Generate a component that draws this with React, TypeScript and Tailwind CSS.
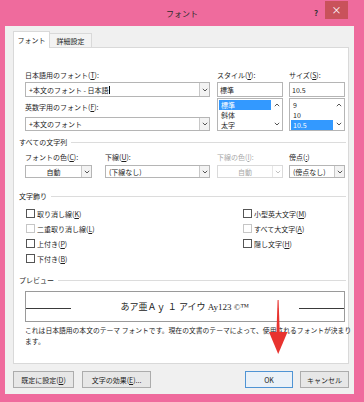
import React from 'react'

function Chevron({ up = false, color = '#555' }: { up?: boolean; color?: string }) {
  return (
    <svg width="6" height="4" viewBox="0 0 6 4" className={up ? 'rotate-180' : ''}>
      <path d="M0.8 0.8 L3 3 L5.2 0.8" fill="none" stroke={color} strokeWidth="1" />
    </svg>
  )
}

function Combo({ value, className = '', center = false, disabled = false, caret = false }: { value: string; className?: string; center?: boolean; disabled?: boolean; caret?: boolean }) {
  return (
    <div className={`flex items-stretch border bg-white ${disabled ? 'border-[#dadada]' : 'border-[#b5b5b5]'} ${className}`}>
      <div className={`flex-1 flex items-center px-[3px] whitespace-nowrap ${center ? 'justify-center' : ''} ${disabled ? 'text-[#a8a8a8]' : 'text-[#1e1e1e]'}`}>
        {value}
        {caret && <span className="ml-px w-px h-[8px] bg-black" />}
      </div>
      <div className={`w-[10px] flex items-center justify-center border-l ${disabled ? 'border-[#e6e6e6]' : 'border-[#c8c8c8] bg-[#f3f3f3]'}`}>
        <Chevron color={disabled ? '#c0c0c0' : '#555'} />
      </div>
    </div>
  )
}

function TextBox({ value }: { value: string }) {
  return <div className="mt-[2px] h-[15px] border border-[#b5b5b5] bg-white flex items-center px-[2px]">{value}</div>
}

function ListBox({ items, selected }: { items: string[]; selected: number }) {
  return (
    <div className="mt-[1px] h-[33px] flex border border-[#b5b5b5] bg-white">
      <div className="flex-1 flex flex-col pt-[1px] pl-px">
        {items.map((it, i) => (
          <div key={it} className={`h-[10px] leading-[10px] pl-[2px] ${i === selected ? 'bg-[#3399ff] text-white' : ''}`}>
            {it}
          </div>
        ))}
      </div>
      <div className="w-[11px] flex flex-col justify-between items-center py-[4px]">
        <Chevron up />
        <Chevron />
      </div>
    </div>
  )
}

function Section({ title, className = '' }: { title: string; className?: string }) {
  return (
    <div className={`flex items-center h-[10px] gap-[4px] ${className}`}>
      <span className="whitespace-nowrap">{title}</span>
      <div className="flex-1 h-px bg-[#dcdcdc]" />
    </div>
  )
}

function Check({ label, k, disabled = false }: { label: string; k: string; disabled?: boolean }) {
  return (
    <div className="flex items-center h-[15px] gap-[2px]">
      <div className={`w-[9px] h-[9px] border bg-white ${disabled ? 'border-[#c6c6c6]' : 'border-[#555]'}`} />
      <span className="whitespace-nowrap">
        {label}(<u>{k}</u>)
      </span>
    </div>
  )
}

function Button({ children, className = '' }: { children: React.ReactNode; className?: string }) {
  return (
    <div className={`h-[17px] flex items-center justify-center border whitespace-nowrap ${className}`}>{children}</div>
  )
}

export default function App() {
  return (
    <div className="relative w-[364px] h-[402px] bg-[#ef6b9d] overflow-hidden font-['Noto_Sans_CJK_JP','Noto_Sans',sans-serif] text-[7px] leading-[10px] text-[#1e1e1e]">
      {/* title bar */}
      <div className="grid grid-cols-[1fr_auto_1fr] h-[26px]">
        <div />
        <div className="pt-[9px] text-[8px] leading-[10px] text-[#2b2b2b]">フォント</div>
        <div className="flex justify-end items-start pr-[16px]">
          <span className="mt-[8px] mr-[7px] text-[8px] leading-[10px] font-bold text-[#333]">?</span>
          <div className="mt-px w-[23px] h-[18px] bg-[#c9525b] flex items-center justify-center text-white text-[10px] leading-none">×</div>
        </div>
      </div>

      <div className="ml-[5px] w-[349px] h-[368px] bg-[#f0f0f0] pl-[8px] pt-[5px] flex flex-col">
        {/* tabs */}
        <div className="flex items-end h-[16px]">
          <div className="relative z-10 -mb-px w-[37px] h-[17px] bg-white border border-b-0 border-[#d9d9d9] flex items-center justify-center">フォント</div>
          <div className="w-[42px] h-[14px] bg-[#f3f3f3] border border-l-0 border-b-0 border-[#d9d9d9] flex items-center justify-center">詳細設定</div>
        </div>

        {/* panel */}
        <div className="w-[336px] h-[317px] bg-white border border-[#d9d9d9] pl-[5px] pr-[2px] pt-[22px] flex flex-col">
          <div className="flex ml-[6px]">
            <div className="w-[185px] flex flex-col">
              <div className="h-[10px]">日本語用のフォント(<u>T</u>):</div>
              <Combo className="mt-[2px] h-[15px]" value="+本文のフォント - 日本語" caret />
              <div className="mt-[5px] h-[10px]">英数字用のフォント(<u>F</u>):</div>
              <Combo className="mt-[5px] h-[14px]" value="+本文のフォント" />
            </div>
            <div className="w-[66px] ml-[7px] flex flex-col">
              <div className="h-[10px]">スタイル(<u>Y</u>):</div>
              <TextBox value="標準" />
              <ListBox items={['標準', '斜体', '太字']} selected={0} />
            </div>
            <div className="w-[56px] ml-[6px] flex flex-col">
              <div className="h-[10px]">サイズ(<u>S</u>):</div>
              <TextBox value="10.5" />
              <ListBox items={['9', '10', '10.5']} selected={2} />
            </div>
          </div>

          <Section className="mt-[6px]" title="すべての文字列" />

          <div className="flex ml-[6px] mt-[5px]">
            <div className="w-[67px]">
              <div className="h-[10px]">フォントの色(<u>C</u>):</div>
              <Combo className="mt-[3px] h-[13px]" value="自動" center />
            </div>
            <div className="w-[105px] ml-[13px]">
              <div className="h-[10px]">下線(<u>U</u>):</div>
              <Combo className="mt-[3px] h-[13px]" value="(下線なし)" />
            </div>
            <div className="w-[66px] ml-[7px]">
              <div className="h-[10px] text-[#a8a8a8]">下線の色(<u>I</u>):</div>
              <Combo className="mt-[3px] h-[13px]" value="自動" center disabled />
            </div>
            <div className="w-[56px] ml-[6px]">
              <div className="h-[10px]">傍点(<u>:</u>)</div>
              <Combo className="mt-[3px] h-[13px]" value="(傍点なし)" />
            </div>
          </div>

          <Section className="mt-[13px]" title="文字飾り" />

          <div className="flex ml-[7px] mt-[5px]">
            <div className="w-[217px] flex flex-col">
              <Check label="取り消し線" k="K" />
              <Check label="二重取り消し線" k="L" disabled />
              <Check label="上付き" k="P" />
              <Check label="下付き" k="B" />
            </div>
            <div className="flex flex-col">
              <Check label="小型英大文字" k="M" />
              <Check label="すべて大文字" k="A" disabled />
              <Check label="隠し文字" k="H" />
            </div>
          </div>

          <Section className="mt-[9px]" title="プレビュー" />

          <div className="ml-[6px] mt-[6px] w-[320px] h-[31px] border border-[#9a9a9a] flex items-center">
            <div className="w-[45px] h-px bg-[#3a3a3a] mt-[4px]" />
            <div className="flex-1 text-center whitespace-nowrap text-[9px] leading-[12px] font-['Liberation_Serif','Noto_Sans_CJK_JP',serif] text-[#222]">
              あア亜Ａｙ １ アイウ Ay123 ©™
            </div>
            <div className="w-[45px] h-px bg-[#3a3a3a] mt-[4px]" />
          </div>

          <div className="ml-[6px] mt-[3px] text-[6.8px] leading-[11px] whitespace-nowrap">
            これは日本語用の本文のテーマ フォントです。現在の文書のテーマによって、使用されるフォントが決まり
            <br />
            ます。
          </div>
        </div>

        {/* buttons */}
        <div className="flex mt-[7px] pr-[5px]">
          <Button className="w-[61px] border-[#acacac] bg-[#e7e7e7]">
            既定に設定(<u>D</u>)
          </Button>
          <Button className="w-[69px] ml-[8px] border-[#acacac] bg-[#e7e7e7]">
            文字の効果(<u>E</u>)...
          </Button>
          <Button className="w-[48px] ml-auto border-[#4f94d4] bg-[#eaf1f8]">OK</Button>
          <Button className="w-[49px] ml-[7px] border-[#acacac] bg-[#e7e7e7]">キャンセル</Button>
        </div>
      </div>

      {/* red annotation arrow */}
      <svg className="absolute left-0 top-0 pointer-events-none" width="364" height="402" viewBox="0 0 364 402">
        <polygon points="277.6,300 278.6,300 279.8,334 276.4,334" fill="#e8332f" />
        <polygon points="269,332 287.5,332 278.2,354" fill="#e8332f" />
      </svg>
    </div>
  )
}
